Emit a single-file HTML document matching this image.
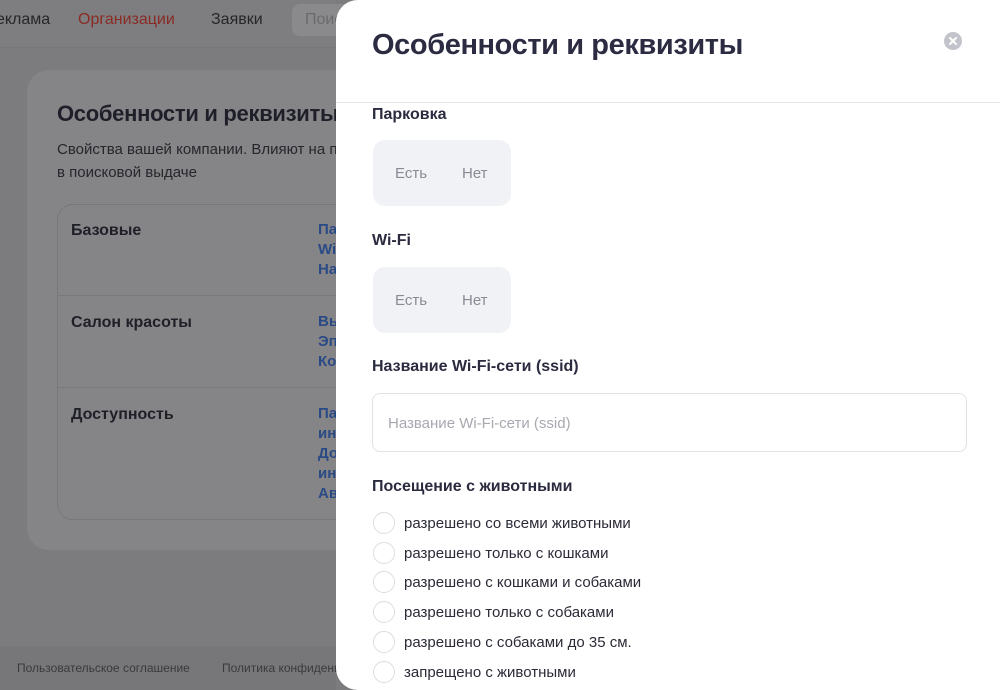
<!DOCTYPE html>
<html><head><meta charset="utf-8"><style>
*{margin:0;padding:0;box-sizing:border-box}
body{width:1000px;height:690px;overflow:hidden;position:relative;font-family:"Liberation Sans",sans-serif;background:#7c7c7e}
.abs{position:absolute;white-space:nowrap}
.nav{font-size:16px;color:#26262a;top:11px}
.card{position:absolute;left:27px;top:70px;width:400px;height:480px;background:#858587;border-radius:22px}
.inner{position:absolute;left:57px;top:204px;width:400px;height:316px;border:1px solid #787879;border-radius:16px}
.sec{font-size:16px;font-weight:bold;color:#1f1f28}
.lnk{font-size:15px;color:#2a4a86;font-weight:bold;line-height:20px}
.modal{position:absolute;left:336px;top:0;width:680px;height:690px;background:#fff;border-radius:22px 0 0 22px}
.h{font-size:16px;font-weight:bold;color:#2b2b40}
.seg{position:absolute;left:37px;width:138px;height:66px;background:#f1f2f6;border-radius:12px;color:#8a8a95;font-size:15px}
.seg span{position:absolute;top:24px}
.rad{position:absolute;left:37px;width:22px;height:22px;border:1.5px solid #ddd;border-radius:50%}
.rl{position:absolute;left:68px;font-size:15px;color:#2b2b38}
</style></head><body>
<div style="position:absolute;left:0;top:0;width:336px;height:48px;background:#7e7e80;border-bottom:1px solid #777"></div>
<div class="abs nav" style="left:-14px">Реклама</div>
<div class="abs nav" style="left:78px;color:#8a2a24">Организации</div>
<div class="abs nav" style="left:211px">Заявки</div>
<div style="position:absolute;left:292px;top:4px;width:60px;height:32px;background:#8a8a8c;border-radius:8px"></div>
<div class="abs" style="left:305px;top:11px;font-size:16px;color:#6a6a6c">Поиск</div>
<div class="card"></div>
<div class="abs" style="left:57px;top:101px;font-size:22px;font-weight:bold;color:#1f1f2a;letter-spacing:-0.3px">Особенности и реквизиты</div>
<div class="abs" style="left:57px;top:138px;font-size:15px;color:#26262c;line-height:23px">Свойства вашей компании. Влияют на по<br>в поисковой выдаче</div>
<div class="inner"></div>
<div style="position:absolute;left:58px;top:295px;width:280px;height:1px;background:#7a7a7b"></div>
<div style="position:absolute;left:58px;top:387px;width:280px;height:1px;background:#7a7a7b"></div>
<div class="abs sec" style="left:71px;top:222px">Базовые</div>
<div class="abs sec" style="left:71px;top:314px">Салон красоты</div>
<div class="abs sec" style="left:71px;top:406px">Доступность</div>
<div class="abs lnk" style="left:318px;top:220px">Па<br>Wi<br>На</div>
<div class="abs lnk" style="left:318px;top:312px">Вы<br>Эп<br>Ко</div>
<div class="abs lnk" style="left:318px;top:404px">Па<br>ин<br>До<br>ин<br>Ав</div>
<div style="position:absolute;left:0;top:646px;width:336px;height:44px;background:#777779"></div>
<div class="abs" style="left:17px;top:661px;font-size:12px;color:#3a3a3c">Пользовательское соглашение</div>
<div class="abs" style="left:222px;top:661px;font-size:12px;color:#3a3a3c">Политика конфиденц</div>
<div class="modal">
<div class="abs" style="left:36px;top:29px;font-size:29px;font-weight:bold;color:#2b2b42;letter-spacing:-0.4px">Особенности и реквизиты</div>
<svg style="position:absolute;left:608px;top:32px" width="18" height="18" viewBox="0 0 18 18"><circle cx="9" cy="9" r="9" fill="#c3c3cb"/><path d="M6 6L12 12M12 6L6 12" stroke="#fff" stroke-width="2" stroke-linecap="round"/></svg>
<div style="position:absolute;left:0;top:102px;width:680px;height:1px;background:#e6e6ea"></div>
<div class="abs h" style="left:36px;top:106px">Парковка</div>
<div class="seg" style="top:140px"><span style="left:22px;top:25px">Есть</span><span style="left:89px;top:25px">Нет</span></div>
<div class="abs h" style="left:36px;top:232px">Wi-Fi</div>
<div class="seg" style="top:267px"><span style="left:22px;top:25px">Есть</span><span style="left:89px;top:25px">Нет</span></div>
<div class="abs h" style="left:36px;top:358px">Название Wi-Fi-сети (ssid)</div>
<div style="position:absolute;left:36px;top:393px;width:595px;height:59px;border:1px solid #e2e2e6;border-radius:8px"></div>
<div class="abs" style="left:52px;top:415px;font-size:15px;color:#a8a8b0">Название Wi-Fi-сети (ssid)</div>
<div class="abs h" style="left:36px;top:478px">Посещение с животными</div>
<div class="rad" style="top:512px"></div><div class="rl" style="top:515px">разрешено со всеми животными</div>
<div class="rad" style="top:542px"></div><div class="rl" style="top:545px">разрешено только с кошками</div>
<div class="rad" style="top:571px"></div><div class="rl" style="top:574px">разрешено с кошками и собаками</div>
<div class="rad" style="top:601px"></div><div class="rl" style="top:604px">разрешено только с собаками</div>
<div class="rad" style="top:631px"></div><div class="rl" style="top:634px">разрешено с собаками до 35 см.</div>
<div class="rad" style="top:661px"></div><div class="rl" style="top:664px">запрещено с животными</div>
</div>
</body></html>
